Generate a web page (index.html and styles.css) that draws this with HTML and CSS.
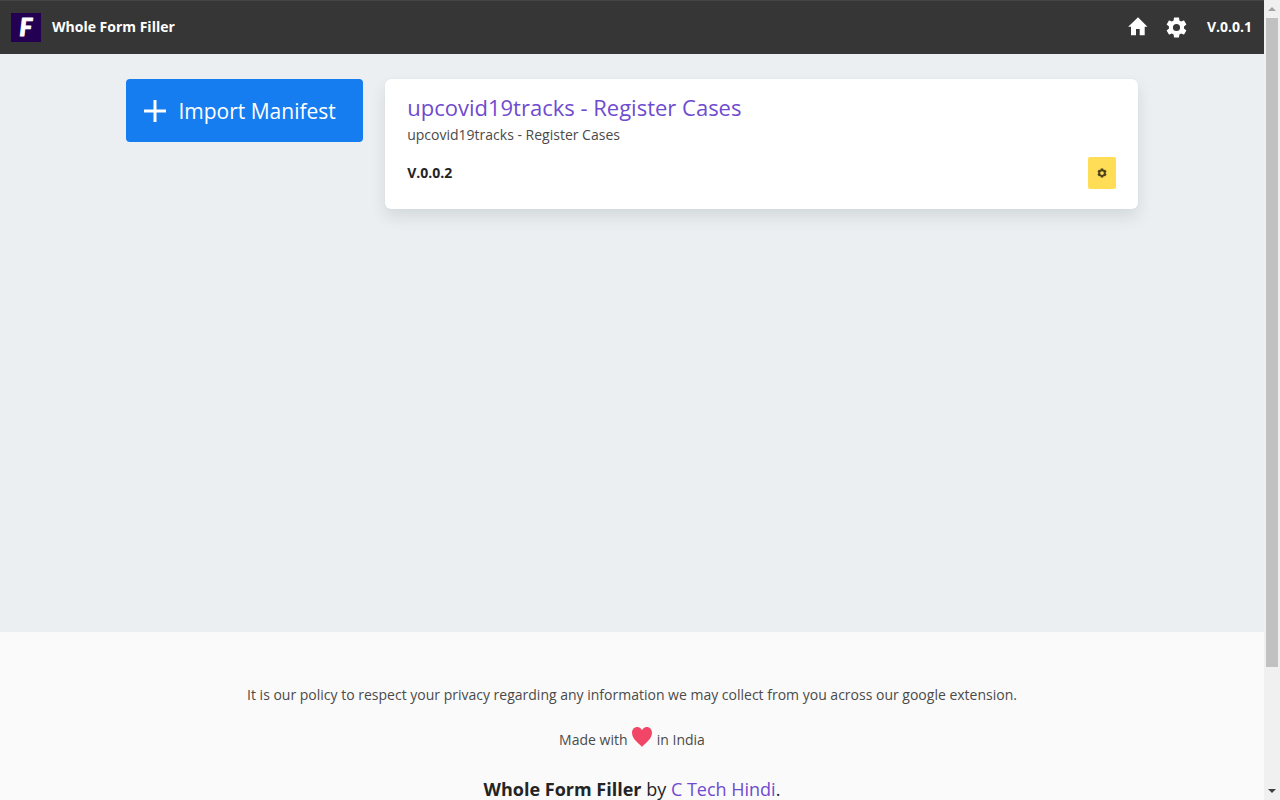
FILE: index.html
```html
<!DOCTYPE html>
<html lang="en">
<head>
<meta charset="utf-8">
<meta name="viewport" content="width=device-width, initial-scale=1">
<title>Whole Form Filler</title>
<link rel="stylesheet" href="styles.css">
</head>
<body>
<div class="window">
  <div class="page">
    <header class="navbar">
      <a class="brand" href="#">
        <svg class="logo" viewBox="0 0 30 29" aria-hidden="true"><rect width="30" height="29" fill="#240052"/><text class="logo-letter" x="15" y="23" text-anchor="middle">F</text></svg>
        <span>Whole Form Filler</span>
      </a>
      <nav class="nav-links">
        <a class="nav-icon" href="#" aria-label="Home"><svg class="icon-home" viewBox="0 0 20 20"><path fill="currentColor" d="M10 .3 19.500 9.800H16.700V18.300H11.700V12H8V18.300H3V9.800H.2Z"/></svg></a>
        <a class="nav-icon" href="#" aria-label="Settings"><svg class="icon-gear" viewBox="2 2 20 20"><path fill="currentColor" d="M19.14 12.94c.04-.3.06-.61.06-.94 0-.32-.02-.64-.07-.94l2.03-1.58c.18-.14.23-.41.12-.61l-1.92-3.32c-.12-.22-.37-.29-.59-.22l-2.39.96c-.5-.38-1.03-.7-1.62-.94l-.36-2.54c-.04-.24-.24-.41-.48-.41h-3.84c-.24 0-.43.17-.47.41l-.36 2.54c-.59.24-1.13.57-1.62.94l-2.39-.96c-.22-.08-.47 0-.59.22L2.74 8.87c-.12.21-.08.47.12.61l2.03 1.58c-.05.3-.09.63-.09.94s.02.64.07.94l-2.03 1.58c-.18.14-.23.41-.12.61l1.92 3.32c.12.22.37.29.59.22l2.39-.96c.5.38 1.03.7 1.62.94l.36 2.54c.05.24.24.41.48.41h3.84c.24 0 .44-.17.47-.41l.36-2.54c.59-.24 1.13-.56 1.62-.94l2.39.96c.22.08.47 0 .59-.22l1.92-3.32c.12-.22.07-.47-.12-.61zM12 15.4A3.4 3.4 0 1 1 12 8.6a3.4 3.4 0 0 1 0 6.8z"/></svg></a>
        <span class="version">V.0.0.1</span>
      </nav>
    </header>
    <main class="content">
      <div class="columns">
        <button class="import" type="button">
          <svg class="icon-plus" viewBox="0 0 22 22" aria-hidden="true"><path d="M11 0V22M0 11H22" stroke="currentColor" stroke-width="3"/></svg>
          <span>Import Manifest</span>
        </button>
        <article class="card">
          <h2 class="card-title"><a href="#">upcovid19tracks - Register Cases</a></h2>
          <p class="card-text">upcovid19tracks - Register Cases</p>
          <div class="card-foot">
            <strong>V.0.0.2</strong>
            <button class="card-settings" type="button" aria-label="Card settings"><svg viewBox="0 0 24 24"><path fill="currentColor" fill-rule="evenodd" d="M9 1h6l1 4 4-1 3 5-3 3 3 3-3 5-4-1-1 4H9l-1-4-4 1-3-5 3-3-3-3 3-5 4 1zM12 7.500a4.500 4.500 0 1 0 0 9 4.500 4.500 0 0 0 0-9z"/></svg></button>
          </div>
        </article>
      </div>
    </main>
    <footer class="footer">
      <p>It is our policy to respect your privacy regarding any information we may collect from you across our google extension.</p>
      <p class="made">Made with <svg class="heart" viewBox="0 0 20 20" role="img" aria-label="love"><path fill="#f14668" d="M10 20C8 17 0 12.500 0 5.800 0 2.300 2.300 0 5.200 0 7.400 0 9.200 1.300 10 3.200 10.800 1.300 12.600 0 14.800 0 17.700 0 20 2.300 20 5.800 20 12.500 12 17 10 20Z"/></svg> in India</p>
      <p class="credit"><strong>Whole Form Filler</strong> by <a href="#">C Tech Hindi</a>.</p>
    </footer>
  </div>
  <div class="scrollbar" aria-hidden="true">
    <svg class="arrow arrow-up" viewBox="0 0 8 4"><path d="M0 4 4 0 8 4Z" fill="#a3a3a3"/></svg>
    <div class="track"><div class="thumb"></div></div>
    <svg class="arrow" viewBox="0 0 8 4"><path d="M0 0H8L4 4Z" fill="#404040"/></svg>
  </div>
</div>
</body>
</html>
```
FILE: styles.css
```css
* { box-sizing: border-box; }
body, h2, p { margin: 0; }
body {
  color: #4a4a4a;
  font-family: "Open Sans", "Noto Sans", sans-serif;
  font-size: 14px;
  line-height: 24px;
}
a { color: #6f4bd0; text-decoration: none; }
button { border: 0; font: inherit; cursor: pointer; }
svg { display: block; }
.window { display: flex; height: 100vh; overflow: hidden; }
.page { display: flex; flex: 1; flex-direction: column; min-width: 0; }
.navbar {
  display: flex;
  justify-content: space-between;
  align-items: center;
  flex: none;
  height: 54px;
  padding: 0 12px 1px 11px;
  border-top: 1px solid #454545;
  background: #363636;
  color: #fff;
  font-weight: 700;
}
.brand, .nav-links { display: flex; align-items: center; }
.brand { gap: 11px; color: #fff; }
.logo { width: 30px; height: 29px; }
.logo-letter {
  fill: #fff;
  stroke: #fff;
  stroke-width: 1;
  stroke-linejoin: round;
  font: italic 900 24px Lato, sans-serif;
}
.nav-links { gap: 18px; }
.nav-icon { color: #fff; }
.version { padding-left: 2px; }
.icon-home { width: 20px; height: 20px; }
.icon-gear { width: 21px; height: 21px; }
.content { flex: none; height: 578px; padding-top: 25px; background: #ebeff2; }
.columns {
  display: grid;
  grid-template-columns: minmax(0, 237fr) minmax(0, 753fr);
  gap: 22px;
  align-items: start;
  width: 80%;
  margin: 0 auto;
}
.import {
  display: flex;
  align-items: center;
  gap: 12px;
  height: 63px;
  padding: 0 18px;
  border-radius: 4px;
  background: #167df0;
  color: #fff;
  font-size: 21px;
  line-height: 32px;
  white-space: nowrap;
}
.icon-plus { flex: none; width: 22px; height: 22px; }
.card {
  padding: 12px 22px 20px;
  border-radius: 6px;
  background: #fff;
  box-shadow: 0 8px 16px rgba(10, 30, 20, .1), 0 0 1px rgba(10, 10, 10, .1);
}
.card-title { font-size: 22px; font-weight: 500; line-height: 32px; }
.card-foot { display: flex; justify-content: space-between; align-items: center; margin-top: 10px; color: #242424; }
.card-settings {
  display: grid;
  place-items: center;
  width: 28px;
  height: 32px;
  padding: 0;
  border-radius: 2px;
  background: #ffdd57;
  color: #4b411a;
}
.card-settings svg { width: 10px; height: 10px; }
.footer { flex: 1; padding: 51px 24px 0; background: #fafafa; text-align: center; }
.made { margin-top: 20px; }
.heart { display: inline-block; width: 20px; height: 20px; margin: 0 1px; vertical-align: -2px; }
.credit { margin-top: 26px; color: #242424; font-size: 18px; line-height: 22px; white-space: nowrap; }
.scrollbar {
  display: flex;
  flex: none;
  flex-direction: column;
  align-items: center;
  gap: 7px;
  width: 16px;
  padding: 7px 2px;
  background: #f0f0f0;
}
.arrow { flex: none; width: 8px; height: 4px; }
.track { flex: 1; width: 12px; }
.thumb { height: 85%; background: #c1c1c1; }
```
